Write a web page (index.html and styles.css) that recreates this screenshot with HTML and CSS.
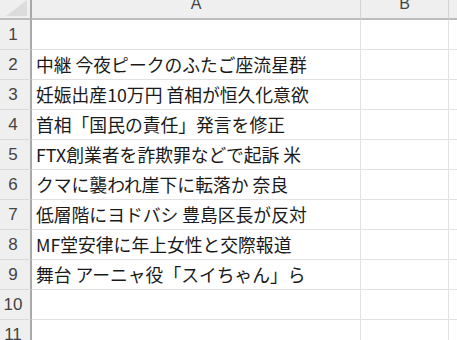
FILE: index.html
```html
<!DOCTYPE html>
<html lang="ja">
<head>
  <meta charset="UTF-8">
  <meta name="viewport" content="width=device-width, initial-scale=1.0">
  <title>Book1 - Excel</title>
  <link rel="stylesheet" href="styles.css">
</head>
<body>
  <div class="sheet">
    <div class="corner">
      <svg width="22" height="17" viewBox="0 0 22 17"><polygon points="21,0 21,16 0,16" fill="#dcdcdc"/></svg>
    </div>
    <div class="col-head"><span>A</span></div>
    <div class="col-head"><span>B</span></div>
    <div class="col-head last"></div>

    <div class="row-head">1</div><div class="cell"></div><div class="cell"></div><div class="cell last"></div>
    <div class="row-head">2</div><div class="cell">中継 今夜ピークのふたご座流星群</div><div class="cell"></div><div class="cell last"></div>
    <div class="row-head">3</div><div class="cell">妊娠出産10万円 首相が恒久化意欲</div><div class="cell"></div><div class="cell last"></div>
    <div class="row-head">4</div><div class="cell">首相「国民の責任」発言を修正</div><div class="cell"></div><div class="cell last"></div>
    <div class="row-head">5</div><div class="cell">FTX創業者を詐欺罪などで起訴 米</div><div class="cell"></div><div class="cell last"></div>
    <div class="row-head">6</div><div class="cell">クマに襲われ崖下に転落か 奈良</div><div class="cell"></div><div class="cell last"></div>
    <div class="row-head">7</div><div class="cell">低層階にヨドバシ 豊島区長が反対</div><div class="cell"></div><div class="cell last"></div>
    <div class="row-head">8</div><div class="cell">MF堂安律に年上女性と交際報道</div><div class="cell"></div><div class="cell last"></div>
    <div class="row-head">9</div><div class="cell">舞台 アーニャ役「スイちゃん」ら</div><div class="cell"></div><div class="cell last"></div>
    <div class="row-head">10</div><div class="cell"></div><div class="cell"></div><div class="cell last"></div>
    <div class="row-head">11</div><div class="cell"></div><div class="cell"></div><div class="cell last"></div>
  </div>
</body>
</html>
```
FILE: styles.css
```css
body {
  margin: 0;
  padding: 0;
  background-color: #ffffff;
  height: 340px;
  overflow: hidden;
  font-family: "Noto Sans CJK JP", "Noto Sans", sans-serif;
}
.sheet {
  display: grid;
  grid-template-columns: 32px 329px 88px 1fr;
  grid-auto-rows: 30px;
  grid-template-rows: 20px;
}
.sheet > div {
  box-sizing: border-box;
  overflow: hidden;
}
.corner {
  background-color: #efefef;
  border-right: 2px solid #a8a8a8;
  border-bottom: 2px solid #bdbdbd;
  display: flex;
  justify-content: flex-end;
  align-items: flex-start;
  padding-right: 2px;
}
.corner svg {
  display: block;
}
.col-head {
  background-color: #efefef;
  border-right: 1px solid #d4d4d4;
  border-bottom: 2px solid #bdbdbd;
  display: flex;
  justify-content: center;
  align-items: flex-start;
  color: #444444;
  font-family: "Liberation Sans", sans-serif;
  font-size: 16px;
}
.col-head span {
  line-height: 1;
  margin-top: -4px;
}
.row-head {
  background-color: #efefef;
  border-right: 2px solid #a8a8a8;
  border-bottom: 1px solid #d9d9d9;
  display: flex;
  align-items: center;
  justify-content: center;
  padding-right: 4px;
  color: #444444;
  font-family: "Liberation Sans", sans-serif;
  font-size: 17px;
}
.cell {
  border-right: 1px solid #e1e1e1;
  border-bottom: 1px solid #e1e1e1;
  padding-left: 4px;
  font-size: 17.8px;
  line-height: 29px;
  color: #1a1a1a;
  white-space: nowrap;
}
.last {
  border-right: none;
}
```
